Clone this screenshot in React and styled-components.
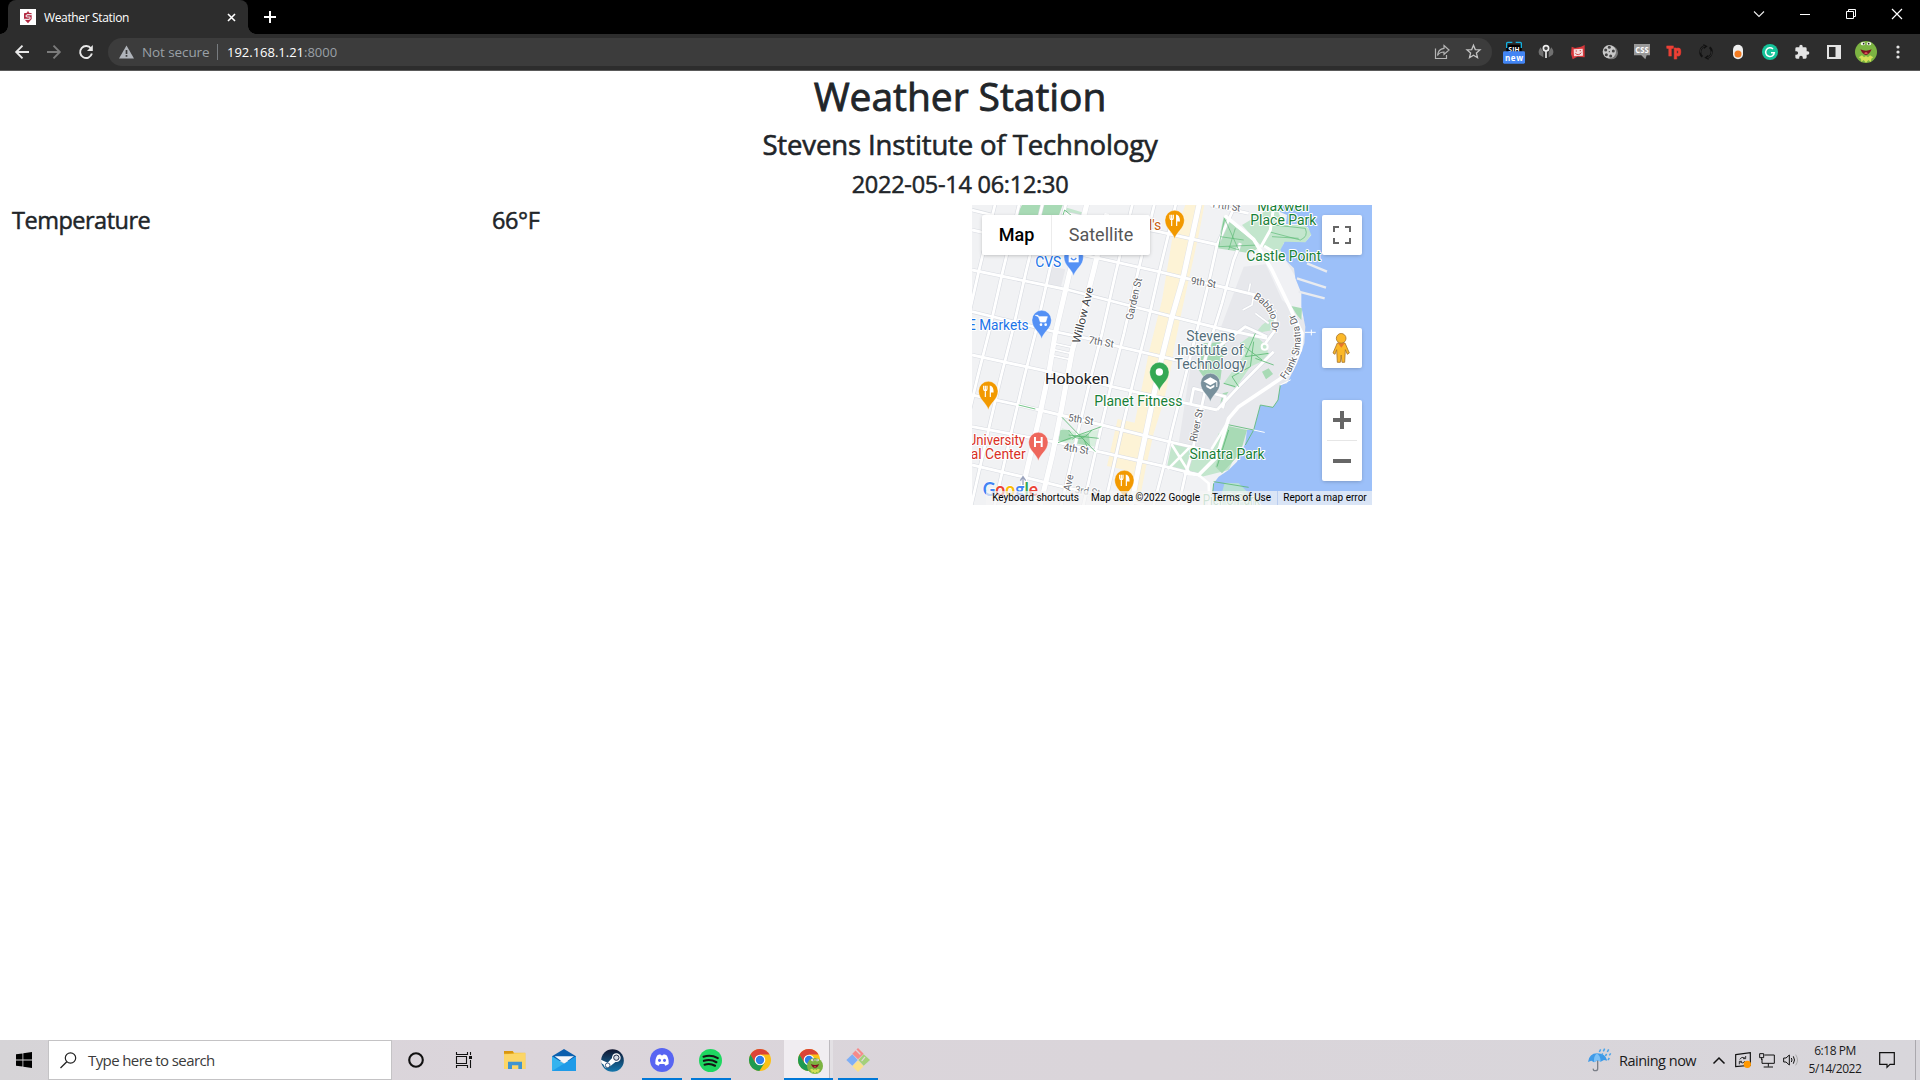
import React from "react";
import styled, { createGlobalStyle } from "styled-components";

const ui = `"Open Sans", "Noto Sans", sans-serif`;

const Global = createGlobalStyle`
  *, *::before, *::after { box-sizing: border-box; }
  body { margin: 0; background: #fff; overflow: hidden; font-family: ${ui}; }
  h1, h3, h4 { margin: 0 0 8px; }
`;

const Screen = styled.div`
  width: 1920px;
  height: 1080px;
  display: flex;
  flex-direction: column;
  overflow: hidden;
`;

const Glyph = styled.svg`
  display: block;
  flex: none;
  overflow: visible;
  width: ${(p) => p.$w}px;
  height: ${(p) => p.$h || p.$w}px;
`;

/* ---------- browser ---------- */

const TabStrip = styled.header`
  height: 34px;
  flex: none;
  background: #000;
  display: flex;
  padding-left: 8px;
`;

const Tab = styled.div`
  position: relative;
  width: 240px;
  height: 34px;
  padding: 0 12px 0 12px;
  display: flex;
  align-items: center;
  background: #2d2d2d;
  border-radius: 8px 8px 0 0;
  &::before, &::after {
    content: "";
    position: absolute;
    bottom: 0;
    width: 8px;
    height: 8px;
  }
  &::before { left: -8px; background: radial-gradient(circle at 0 0, #000 7.5px, #2d2d2d 8px); }
  &::after { right: -8px; background: radial-gradient(circle at 100% 0, #000 7.5px, #2d2d2d 8px); }
`;

const TabTitle = styled.span`
  flex: 1;
  margin-left: 8px;
  color: #fff;
  font-size: 12px;
  letter-spacing: -0.35px;
  white-space: nowrap;
`;

const NewTab = styled.div`
  width: 28px;
  margin-left: 8px;
  display: grid;
  place-items: center;
`;

const WindowButtons = styled.div`
  margin-left: auto;
  display: grid;
  grid-template-columns: repeat(4, 46px);
  height: 28px;
  align-items: center;
  justify-items: center;
`;

const Toolbar = styled.nav`
  height: 37px;
  flex: none;
  background: #2d2d2d;
  border-bottom: 1px solid #5a5a5a;
  display: flex;
  align-items: center;
  padding: 0 5px 0 6px;
`;

const NavButton = styled.div`
  width: 32px;
  height: 32px;
  display: grid;
  place-items: center;
`;

const AddressBar = styled.div`
  height: 28px;
  width: 1384px;
  margin: 0 6px;
  border-radius: 14px;
  background: #3c3c3c;
  display: flex;
  align-items: center;
  padding: 0 11px 0 11px;
  font-size: 13.5px;
  color: #9aa0a6;
`;

const NotSecure = styled.span`
  margin-left: 8px;
  width: 67px;
  white-space: nowrap;
  letter-spacing: -0.1px;
`;

const Divider = styled.span`
  width: 1px;
  height: 16px;
  background: #777b7f;
  margin: 0 9px 0 8px;
`;

const Url = styled.span`
  flex: 1;
  font-size: 13px;
  letter-spacing: -0.01px;
  b { font-weight: 400; color: #fff; }
`;

const BarIcons = styled.div`
  display: flex;
  gap: 16px;
`;

const Extensions = styled.div`
  display: grid;
  grid-template-columns: repeat(13, 32px);
  height: 36px;
  align-items: center;
  justify-items: center;
`;

/* ---------- page ---------- */

const Page = styled.main`
  flex: 1;
  min-height: 0;
  color: #212529;
  text-align: center;
  -webkit-text-stroke: 0.5px #212529;
`;

const Title = styled.h1`
  font-size: 39px;
  line-height: 48px;
  font-weight: 500;
  padding-top: 1px;
  letter-spacing: -0.05px;
  -webkit-text-stroke-width: 0.8px;
`;

const Place = styled.h3`
  font-size: 27.5px;
  line-height: 33.6px;
  font-weight: 500;
  letter-spacing: -0.13px;
  -webkit-text-stroke-width: 0.6px;
`;

const Line = styled.h4`
  font-size: 23.5px;
  line-height: 28.8px;
  font-weight: 500;
  margin-bottom: ${(p) => (p.$last ? 7 : 8)}px;
  padding-top: ${(p) => p.$top || 0}px;
  letter-spacing: ${(p) => p.$ls || 0}px;
`;

const Row = styled.section`
  display: grid;
  grid-template-columns: repeat(4, 1fr);
  text-align: left;
`;

const Col = styled.div`
  padding: 0 12px;
`;

/* ---------- map ---------- */

const MapBox = styled.div`
  position: relative;
  width: 400px;
  height: 300px;
  overflow: hidden;
  font-family: Roboto, "Liberation Sans", sans-serif;
  -webkit-text-stroke: 0;
`;

const MapCard = styled.div`
  position: absolute;
  background: #fff;
  border-radius: 2px;
  box-shadow: 0 1px 4px -1px rgba(0, 0, 0, 0.3);
  display: flex;
  align-items: center;
  justify-content: center;
  flex-direction: ${(p) => (p.$column ? "column" : "row")};
  top: ${(p) => p.$top}px;
  ${(p) => (p.$left ? "left: 10px;" : "right: 10px;")}
  width: ${(p) => p.$w || 40}px;
  height: ${(p) => p.$h || 40}px;
`;

const MapType = styled.span`
  flex: ${(p) => p.$w};
  height: 40px;
  line-height: 40px;
  text-align: center;
  font-size: 18px;
  font-weight: ${(p) => (p.$on ? 500 : 400)};
  color: ${(p) => (p.$on ? "#000" : "#565656")};
  border-left: ${(p) => (p.$on ? "0" : "1px solid #ececec")};
`;

const ZoomButton = styled.div`
  width: 30px;
  height: 40px;
  display: grid;
  place-items: center;
  &:last-child { height: 41px; border-top: 1px solid #e6e6e6; }
`;

const MapFooter = styled.div`
  position: absolute;
  right: 0;
  bottom: 0;
  height: 14px;
  display: flex;
  background: rgba(245, 245, 245, 0.7);
  font-size: 10px;
  line-height: 14px;
  color: #000;
  white-space: nowrap;
`;

const Credit = styled.div`
  width: ${(p) => p.$w}px;
  text-align: center;
  letter-spacing: ${(p) => p.$ls || 0}px;
  &:last-child { border-left: 1px solid #b9cdf0; }
`;

const shift = (pts, dx) => pts.map(([x, y]) => `${x + dx},${y}`).join(" ");
const avenue = [[50, 10], [0, 215], [-42, 400], [-75, 530], [-108, 670], [-165, 920]];
const thin = [
  ...[20, 92, 162, 232, 432, 498, 562].map((x) => shift(avenue, x)),
  "-45,215 -60,280 -90,400",
  "805,130 785,180 750,310 722,400 690,510",
  "735,135 712,240 680,370 655,470 630,570 600,690 575,800 545,915",
  "790,15 735,135",
  "700,570 680,660 660,760 640,825 620,915",
  "0,90 180,130 560,215 850,285",
  "280,40 560,95 740,135",
  "0,210 290,270 600,350 750,387 885,415",
  "0,335 234,392 345,415 440,440 620,482",
  "0,465 230,515 420,560 620,605 735,630",
  "0,585 140,615 265,645 390,675 590,725 745,760",
  "0,680 160,710 270,730 580,800 680,825",
  "0,795 150,830 270,860 520,915",
  "0,30 60,45",
  "715,15 830,40",
  "655,615 665,565 760,590 752,625",
  "735,630 800,560 905,455",
  "740,440 820,380 885,410",
  "850,285 890,310 910,345 910,390 880,430",
];
const alleys = ["245,430 300,442", "243,448 296,460", "238,466 292,478", "845,285 840,315 812,330", "850,340 890,370", "835,250 830,275"];
const thick = [
  "345,10 290,230 250,400 232,510 200,660 160,830 140,915",
  "405,40 368,200 340,310 300,455 268,630 240,770 205,915",
  "682,10 632,240 600,350 565,490 530,660 500,800 478,915",
];

const Pin = ({ x, y, c, children }) => (
  <g transform={`translate(${x} ${y})`}>
    <path d="M0 56C-5 36-29 26-29 0a29 29 0 1 1 58 0C29 26 5 36 0 56Z" fill={c} stroke="#fff" strokeOpacity=".5" strokeWidth="2" />
    {children}
  </g>
);
const Fork = () => (
  <g fill="none" stroke="#fff" strokeWidth="3.5">
    <path d="M-14-16v10q0 5 5 5t5-5v-10M-9-16V18" />
    <path d="M6 18V-14q8 2 8 17H7" fill="#fff" />
  </g>
);
const Label = ({ x, y, s = 42, c = "#188038", r = 0, w, a = "middle", halo = 6, children }) => (
  <text
    x={x} y={y} fontSize={s} fill={c} textAnchor={a}
    transform={r ? `rotate(${r} ${x} ${y})` : undefined}
    textLength={w} lengthAdjust="spacingAndGlyphs"
    stroke="#fff" strokeWidth={halo} strokeLinejoin="round" paintOrder="stroke"
  >{children}</text>
);

const MapDrawing = () => (
  <Glyph $w={400} $h={300} viewBox="0 15 1200 900" fontFamily="Roboto, sans-serif">
    <rect y="15" width="1200" height="900" fill="#f1f2f4" />
    <path d="M815 200 1000 180 1010 560 860 700 780 760 620 730 660 470 740 400Z" fill="#e7e8ec" />
    <path d="M860 150 940 180 1000 280 1000 360 930 300 880 190Z" fill="#f0f1f4" />
    <path d="M240 200 280 208 265 268 228 258Z" fill="#e7e8ec" />
    <path d="M640 15 697 15 680 105 650 240 630 330 605 450 600 490 575 605 545 700 520 810 500 915 440 915 460 810 405 798 437 657 488 668 510 560 530 460 570 300 600 120Z" fill="#fdf3d6" />
    <path d="M150 15H272L260 48H132Z" fill="#a8dab5" />
    <path d="M275 20 340 40 330 48 272 45Z" fill="#c3e6cd" />
    <path d="M755 50 865 140 835 160 735 145Z" fill="#b5dfc0" />
    <path d="M810 75 910 15 935 75 1000 75 1020 100 1000 128 935 130 925 155 880 145 865 135Z" fill="#c3e6cd" />
    <path d="M695 430 760 425 745 540 705 545 680 510Z" fill="#a8dab5" />
    <path d="M850 400 905 390 910 345 870 375Z M845 400 885 440 890 475 835 500 790 565 755 550 820 460 805 430Z" fill="#c3e6cd" />
    <path d="M958 318 990 325 988 360 975 345Z M870 515 890 505 903 522 882 538Z M752 580 770 575 745 610Z" fill="#a8dab5" />
    <path d="M270 685 320 700 380 690 370 740 330 735 258 728Z" fill="#d8efde" />
    <path d="M265 690 290 690 300 718 258 728Z M325 705 350 700 355 738 310 730Z" fill="#a8dab5" />
    <path d="M600 728 720 755 740 700 825 690 770 810 690 830 585 800Z" fill="#c3e6cd" />
    <path d="M768 678 825 690 805 760 750 820 730 800Z" fill="#a8dab5" />
    <g fill="none" strokeLinejoin="round">
      <g stroke="#d9dce2" strokeWidth="12">{thin.map((p) => <polyline key={p} points={p} />)}</g>
      <g stroke="#dfe1e6" strokeWidth="18">{thick.map((p) => <polyline key={p} points={p} />)}</g>
      <g stroke="#d9dce2" strokeWidth="8">{alleys.map((p) => <polyline key={p} points={p} />)}</g>
      <g stroke="#fff" strokeWidth="5">{alleys.map((p) => <polyline key={p} points={p} />)}</g>
      <g stroke="#fff" strokeWidth="8.5">{thin.map((p) => <polyline key={p} points={p} />)}</g>
      <g stroke="#fff" strokeWidth="15.5">{thick.map((p) => <polyline key={p} points={p} />)}</g>
    </g>
    <path
      d="M915 15 922 35 945 45 942 72 985 72 1008 82 1018 105 1000 127 938 125 925 150 940 180 966 205 970 235 988 280 988 320 1000 380 997 430 975 490 945 550 925 555 918 600 903 622 865 615 845 690 825 690 820 730 795 785 770 810 740 830 725 850 718 915 1200 915 1200 15Z"
      fill="#9cc0f9"
    />
    <path d="M758 848 800 850 830 880 820 915 740 915Z" fill="#b8e0d6" />
    <g fill="none" stroke="#5bb974" strokeWidth="2.5">
      <path d="M925 555 918 600 903 622 865 615 845 690 768 674M845 690 820 735M725 850 718 915M725 845 830 862M140 615 190 627" />
      <path d="M758 55 740 140 860 135M760 60 800 150 770 140M745 110 815 120M790 85 770 150" strokeWidth="2" />
      <path d="M905 75 1000 85Q1010 110 985 120L890 95M900 110 980 115" strokeWidth="2" />
      <path d="M270 652 370 755M388 680 258 728M290 690Q320 740 360 690M380 715 290 705M300 718Q330 690 345 740" />
      <path d="M805 430 870 480M850 400 820 470 890 460M835 500 780 530 800 560M850 475 905 495M755 550 790 560M845 425 835 500" />
      <path d="M735 800 770 690M272 48 278 30 300 48" />
    </g>
    <g fill="none" stroke="#fff" strokeLinecap="round">
      <path d="M762 50 845 118 900 210 955 325 975 370 990 400 985 450 950 520 800 620 770 655 735 770 680 825 640 818" strokeWidth="11" strokeLinejoin="round" />
      <path d="M905 20 895 90 868 138M880 140 930 170" strokeWidth="9" />
      <path d="M680 825 710 850 712 915M765 670 720 745 M600 735 650 815M650 745 590 805" strokeWidth="8" />
      <path d="M1005 190 1065 215M975 235 1062 263M980 275 1058 295" strokeWidth="7" stroke="#e9ebef" strokeLinecap="butt" />
      <path d="M1000 397H1030M1018 390V405M845 690 877 697M925 555 955 540" strokeWidth="3" />
      <circle cx="878" cy="440" r="9" strokeWidth="6" />
    </g>
    <path d="M153 855V834M145 842 153 830 161 842" fill="none" stroke="#9aa3bd" strokeWidth="4" />

    <Label x={760} y={28} s={31} c="#5f6368" r={8} w={88}>11th St</Label>
    <Label x={933} y={33} w={155}>Maxwell</Label>
    <Label x={934} y={75} w={198}>Place Park</Label>
    <Label x={935} y={183} w={224}>Castle Point</Label>
    <Label x={568} y={89} c="#c7600e" a="end">l's</Label>
    <Label x={229} y={201} c="#1a73e8" w={78}>CVS</Label>
    <Label x={170} y={390} c="#1a73e8" a="end" w={182}>E Markets</Label>
    <Label x={693} y={258} s={31} c="#5f6368" r={9} w={76}>9th St</Label>
    <Label x={386} y={436} s={31} c="#5f6368" r={10} w={76}>7th St</Label>
    <Label x={325} y={669} s={31} c="#5f6368" r={9} w={76}>5th St</Label>
    <Label x={311} y={757} s={31} c="#5f6368" r={9} w={76}>4th St</Label>
    <Label x={345} y={884} s={31} c="#80868b" r={9} w={76}>3rd St</Label>
    <Label x={496} y={299} s={31} c="#5f6368" r={-77} w={128}>Garden St</Label>
    <Label x={344} y={348} s={34} c="#3c4043" r={-76} w={172}>Willow Ave</Label>
    <Label x={684} y={678} s={31} c="#5f6368" r={-78} w={100}>River St</Label>
    <Label x={300} y={850} s={31} c="#5f6368" r={-78} w={50}>Ave</Label>
    <path id="babbio" d="M843 294Q912 335 896 400" fill="none" />
    <path id="sinatra" d="M940 540Q1020 430 960 330" fill="none" />
    <g fontSize="30" fill="#5f6368" stroke="#fff" strokeWidth="6" paintOrder="stroke" strokeLinejoin="round">
      <text textLength="122"><textPath href="#babbio">Babbio Dr</textPath></text>
      <text textLength="212"><textPath href="#sinatra">Frank Sinatra Dr</textPath></text>
    </g>
    <Label x={716} y={423} c="#546e7a" w={147}>Stevens</Label>
    <Label x={715} y={465} c="#546e7a" w={200}>Institute of</Label>
    <Label x={715} y={507} c="#546e7a" w={215}>Technology</Label>
    <Label x={315} y={551} s={44} c="#202124" w={192}>Hoboken</Label>
    <Label x={499} y={618} w={264}>Planet Fitness</Label>
    <Label x={159} y={735} c="#d93025" a="end" w={172}>University</Label>
    <Label x={161} y={777} c="#d93025" a="end" w={165}>al Center</Label>
    <Label x={765} y={777} w={225}>Sinatra Park</Label>
    <Label x={778} y={915} c="#6fb58a" w={172}>Pier C Park</Label>

    <Pin x={608} y={60} c="#f29900"><Fork /></Pin>
    <Pin x={49} y={573} c="#f29900"><Fork /></Pin>
    <Pin x={457} y={840} c="#f29900"><Fork /></Pin>
    <Pin x={305} y={171} c="#5491f5">
      <path d="M-15-10H15V16H-15Z" fill="#fff" /><path d="M-8 3Q0 14 8 3" fill="none" stroke="#5491f5" strokeWidth="4" />
    </Pin>
    <Pin x={209} y={360} c="#5491f5">
      <path d="M-19-14H-11L-4 6H12L17-10H-9Z" fill="#fff" stroke="#fff" strokeWidth="2" />
      <circle cx="-2" cy="14" r="4" fill="#fff" /><circle cx="12" cy="14" r="4" fill="#fff" />
    </Pin>
    <Pin x={562} y={516} c="#34a853"><circle r="11" fill="#fff" /></Pin>
    <Pin x={199} y={726} c="#ee675c"><path d="M-10-15V15M10-15V15M-10 0H10" stroke="#fff" strokeWidth="6" /></Pin>
    <Pin x={715} y={549} c="#78909c">
      <path d="M0-17 21-5 0 7-21-5ZM-12 5 0 12 12 5V12L0 19-12 12ZM18-4h3V12h-3Z" fill="#fff" />
    </Pin>
    <text x="32" y="887" fontSize="54" fontFamily="Lato, sans-serif" textLength="166" lengthAdjust="spacingAndGlyphs" fontWeight="700" stroke="#fff" strokeWidth="4" paintOrder="stroke"><tspan fill="#4285f4">G</tspan><tspan fill="#ea4335">o</tspan><tspan fill="#fbbc04">o</tspan><tspan fill="#4285f4">g</tspan><tspan fill="#34a853">l</tspan><tspan fill="#ea4335">e</tspan></text>
  </Glyph>
);

const CampusMap = () => (
  <MapBox>
    <MapDrawing />
    <MapCard $top={10} $left $w={168}>
      <MapType $on $w={69}>Map</MapType>
      <MapType $w={98}>Satellite</MapType>
    </MapCard>
    <MapCard $top={10}>
      <Glyph $w={18} viewBox="0 0 18 18"><path d="M1 6V1h5M12 1h5v5M17 12v5h-5M6 17H1v-5" fill="none" stroke="#666" strokeWidth="2" /></Glyph>
    </MapCard>
    <MapCard $top={123}>
      <Glyph $w={18} $h={30} viewBox="1 0 54 90">
        <path d="M14 30H37L50 60 44 64 38 50 36 88H28L25.500 66 23 88H14L12 50 7 64 1 60Z" fill="#fbb829" stroke="#a9762a" strokeWidth="2.500" />
        <path d="M16 31H36L26 44Z" fill="#e8762c" />
        <circle cx="25.500" cy="16" r="14.500" fill="#fbb829" stroke="#a9762a" strokeWidth="2.500" />
      </Glyph>
    </MapCard>
    <MapCard $top={195} $h={81} $column>
      <ZoomButton><Glyph $w={18} viewBox="0 0 18 18"><path d="M0 9H18M9 0V18" stroke="#666" strokeWidth="4" /></Glyph></ZoomButton>
      <ZoomButton><Glyph $w={18} viewBox="0 0 18 18"><path d="M0 9H18" stroke="#666" strokeWidth="4" /></Glyph></ZoomButton>
    </MapCard>
    <MapFooter>
      <Credit $w={99}>Keyboard shortcuts</Credit>
      <Credit $w={121}>Map data ©2022 Google</Credit>
      <Credit $w={71}>Terms of Use</Credit>
      <Credit $w={95}>Report a map error</Credit>
    </MapFooter>
  </MapBox>
);

/* ---------- taskbar ---------- */

const Taskbar = styled.footer`
  height: 40px;
  flex: none;
  display: flex;
  background: linear-gradient(90deg, #d6d4d7, #dbd5db 25%, #dad5da 60%, #d8d6db);
  color: #1b1b1b;
`;

const TaskCell = styled.div`
  position: relative;
  width: ${(p) => p.$w || 49}px;
  height: 40px;
  display: grid;
  place-items: center;
  background: ${(p) => (p.$active ? "#f0edf1" : "transparent")};
  &::after {
    content: "";
    position: absolute;
    bottom: 0;
    height: 2px;
    left: ${(p) => (p.$active ? 0 : 4.5)}px;
    right: ${(p) => (p.$active ? 0 : 4.5)}px;
    background: ${(p) => (p.$open ? "#0078d7" : "transparent")};
  }
`;

const StackEdge = styled.i`
  position: absolute;
  right: 0;
  top: 0;
  width: 4px;
  height: 38px;
  background: #e3e0e4;
  border-left: 1px solid #bdbabf;
`;

const SearchBox = styled.div`
  width: 344px;
  height: 40px;
  background: #fff;
  border: 1px solid #c4c3c5;
  display: flex;
  align-items: center;
  padding-left: 11px;
  gap: 11px;
  font-size: 15px;
  color: #3b3b3b;
  letter-spacing: -0.6px;
`;

const Apps = styled.div`
  display: flex;
  margin-left: 2px;
`;

const Tray = styled.div`
  margin-left: auto;
  display: flex;
  align-items: center;
  padding-right: 4px;
`;

const Forecast = styled.span`
  margin-left: 7px;
  width: 88px;
  font-size: 14.5px;
  letter-spacing: -0.5px;
  white-space: nowrap;
`;

const TrayCell = styled.div`
  width: 24px;
  display: grid;
  place-items: center;
`;

const Clock = styled.div`
  width: 64px;
  text-align: center;
  font-size: 12px;
  line-height: 18px;
  letter-spacing: -0.45px;
`;

const Notice = styled.div`
  width: 49px;
  height: 40px;
  padding-right: 8px;
  display: grid;
  place-items: center;
  border-right: 1px solid #aaa8ad;
`;

const Frog = ({ cx, cy, r }) => (
  <g transform={`translate(${cx} ${cy}) scale(${r / 33})`}>
    <circle r="33" fill="#7cb342" />
    <path d="M-22 16 -12 10 -6 16 0 12 6 16 12 10 22 16 16 20 14 30 7 24 0 32-7 24-14 30-15 20Z" fill="#d4e157" />
    <path d="M-17-8Q0 0 17-8 10 8 0 9-10 8-17-8Z" fill="#7b1220" />
    <path d="M-6 4Q0-2 6 4 0 8-6 4Z" fill="#ef5b63" />
    <ellipse cx="-9" cy="-25" rx="7" ry="5" fill="#f4f7e8" /><ellipse cx="9" cy="-25" rx="7" ry="5" fill="#f4f7e8" />
    <circle cx="-7" cy="-25" r="2.500" fill="#222" /><circle cx="8" cy="-25" r="2.500" fill="#222" />
  </g>
);

const ChromeLogo = ({ frog }) => (
  <Glyph $w={24} viewBox="0 0 72 72">
    <circle cx="36" cy="36" r="33" fill="#fbc116" />
    <path d="M7.400 19.500A33 33 0 0 1 64.600 19.500H36L21 44Z" fill="#db4437" />
    <path d="M7.400 19.500A33 33 0 0 0 34 69L50 44 22 44Z" fill="#1e9a51" />
    <circle cx="36" cy="36" r="16" fill="#fff" />
    <circle cx="36" cy="36" r="12.500" fill="#2f7de9" />
    {frog && <Frog cx={54} cy={54} r={24} />}
  </Glyph>
);

export default function App() {
  return (
    <Screen>
      <Global />
      <TabStrip>
        <Tab>
          <Glyph $w={16} viewBox="0 0 48 48">
            <rect width="48" height="48" fill="#fff" />
            <path d="M24 5 27 11 35 13V30L24 43 12 30V13L21 11Z" fill="#b2263f" />
            <path d="M37 17H22Q14 21 22 24H29Q33 29 26 31H10" fill="none" stroke="#ecdfe3" strokeWidth="3.500" />
          </Glyph>
          <TabTitle>Weather Station</TabTitle>
          <Glyph $w={9} viewBox="0 0 9 9"><path d="M1 1 8 8M8 1 1 8" stroke="#fff" strokeWidth="1.600" /></Glyph>
        </Tab>
        <NewTab><Glyph $w={12} viewBox="0 0 12 12"><path d="M6 0V12M0 6H12" stroke="#fff" strokeWidth="2" /></Glyph></NewTab>
        <WindowButtons>
          <Glyph $w={10} $h={6} viewBox="0 0 10 6"><path d="M0 .500 5 5.500 10 .500" fill="none" stroke="#eee" strokeWidth="1.100" /></Glyph>
          <Glyph $w={10} viewBox="0 0 10 10"><path d="M0 5.500H10" stroke="#fff" /></Glyph>
          <Glyph $w={10} viewBox="0 0 10 10"><path d="M.500 2.500H7.500V9.500H.500ZM2.500 2.500V.500H9.500V7.500H7.500" fill="none" stroke="#fff" /></Glyph>
          <Glyph $w={10} viewBox="0 0 10 10"><path d="M0 0 10 10M10 0 0 10" stroke="#fff" strokeWidth="1.200" /></Glyph>
        </WindowButtons>
      </TabStrip>

      <Toolbar>
        <NavButton><Glyph $w={14} viewBox="0 0 14 14"><path d="M14 7H1.500M7.500 .700 1.200 7 7.500 13.300" fill="none" stroke="#e8e8e8" strokeWidth="1.900" /></Glyph></NavButton>
        <NavButton><Glyph $w={14} viewBox="0 0 14 14"><path d="M0 7H12.500M6.500 .700 12.800 7 6.500 13.300" fill="none" stroke="#7b7b7b" strokeWidth="1.900" /></Glyph></NavButton>
        <NavButton>
          <Glyph $w={14} viewBox="0 0 14 14">
            <path d="M12 3.500A6 6 0 1 0 12.900 8.600" fill="none" stroke="#e8e8e8" strokeWidth="1.900" />
            <path d="M13.800 0V6H8Z" fill="#e8e8e8" />
          </Glyph>
        </NavButton>
        <AddressBar>
          <Glyph $w={15} $h={14} viewBox="0 0 15 14"><path d="M7.500 .500 15 13.500H0Z" fill="#b0b4ba" /><path d="M7.500 5V9M7.500 10V11.800" stroke="#3c3c3c" strokeWidth="1.700" /></Glyph>
          <NotSecure>Not secure</NotSecure>
          <Divider />
          <Url><b>192.168.1.21</b>:8000</Url>
          <BarIcons>
            <Glyph $w={16} viewBox="0 0 16 16"><path d="M1.500 4.500V14.500H12.500V11M10 1.500 15 6 10 10.500V8Q5.500 8 3.500 11.500 4 5 10 4.300Z" fill="none" stroke="#b5b5b5" strokeWidth="1.200" /></Glyph>
            <Glyph $w={15} viewBox="0 0 15 15"><path d="M7.500 1.200 9.300 5.600 14 5.900 10.400 9 11.500 13.700 7.500 11.200 3.500 13.700 4.600 9 1 5.900 5.700 5.600Z" fill="none" stroke="#c4c4c4" strokeWidth="1.300" /></Glyph>
          </BarIcons>
        </AddressBar>
        <Extensions>
          <Glyph $w={22} $h={22} viewBox="0 -3 66 66" fontFamily="Open Sans, sans-serif" textAnchor="middle" fontWeight="700">
            <rect x="10" y="8" width="46" height="26" fill="#000" />
            <path d="M11 18V4Q11 1 14 1H28M38 1H52Q55 1 55 4V18" fill="none" stroke="#14b1e0" strokeWidth="4" />
            <text x="33" y="30" fontSize="20" fill="#fff" textLength="34">SIH</text>
            <rect y="28" width="66" height="37" rx="4" fill="#4285f4" />
            <text x="33" y="56" fontSize="24" fill="#fff" textLength="54">new</text>
          </Glyph>
          <Glyph $w={16} viewBox="0 0 48 48">
            <path d="M8 10Q-2 22 4 32L16 40V24ZM40 10Q50 22 44 32L32 40V24Z" fill="#707070" />
            <path d="M24 20V42" stroke="#ccc" strokeWidth="6" /><circle cx="24" cy="13" r="8" fill="#444" stroke="#eee" strokeWidth="5" />
          </Glyph>
          <Glyph $w={16} viewBox="0 0 48 48">
            <path d="M5 8 15 12 33 8 44 3V40L22 38 8 46 3 30Z" fill="#d8383c" />
            <path d="M11 16 38 14 39 35 12 37Z" fill="#f6dcdc" /><path d="M16 28Q25 37 34 26M17 21h4M29 20h4" fill="none" stroke="#c62828" strokeWidth="2.500" />
          </Glyph>
          <Glyph $w={16} viewBox="0 0 48 48">
            <circle cx="28" cy="26" r="20" fill="#777" /><circle cx="22" cy="23" r="20" fill="#c9c9c9" />
            <g fill="#444"><circle cx="22" cy="10" r="4.500" /><circle cx="11" cy="18" r="4.500" /><circle cx="13" cy="32" r="4.500" /><circle cx="26" cy="36" r="4.500" /><circle cx="34" cy="21" r="4.500" /><circle cx="22" cy="23" r="2" /></g>
          </Glyph>
          <Glyph $w={16} viewBox="0 0 48 48" fontFamily="Open Sans, sans-serif" fontWeight="700">
            <path d="M0 0H48V34H38L34 46 22 34H0Z" fill="#999" /><text x="4" y="26" fontSize="25" fill="#fff" textLength="40" lengthAdjust="spacingAndGlyphs">CSS</text>
          </Glyph>
          <Glyph $w={16} viewBox="0 0 48 48" fontFamily="Open Sans, sans-serif" fontWeight="800">
            <text x="1" y="36" fontSize="43" fill="#ee4035" stroke="#ee4035" strokeWidth="2" textLength="44" lengthAdjust="spacingAndGlyphs">Tp</text>
          </Glyph>
          <Glyph $w={16} viewBox="0 0 48 48">
            <path d="M13 38A18 18 0 0 1 20 7M35 10A18 18 0 0 1 28 41" fill="none" stroke="#111" strokeWidth="6" />
            <path d="M16 0 29 7 18 15ZM32 48 19 41 30 33Z" fill="#111" />
            <path d="M7 26A18 18 0 0 1 20 7M41 22A18 18 0 0 1 28 41" fill="none" stroke="#666" strokeWidth="1" />
          </Glyph>
          <Glyph $w={16} viewBox="0 0 48 48"><rect x="9" y="2" width="30" height="44" rx="15" fill="#eee" /><circle cx="24" cy="30" r="10.500" fill="#f47b20" /></Glyph>
          <Glyph $w={16} viewBox="0 0 48 48">
            <circle cx="24" cy="24" r="24" fill="#15c39a" />
            <path d="M33 15A13 13 0 1 0 37 26H27" fill="none" stroke="#fff" strokeWidth="4.500" />
          </Glyph>
          <Glyph $w={16} viewBox="0 0 24 24"><path d="M20.500 11H19V7a2 2 0 0 0-2-2h-4V3.500a2.500 2.500 0 0 0-5 0V5H4a2 2 0 0 0-2 2v3.800h1.500a2.700 2.700 0 0 1 0 5.400H2V20a2 2 0 0 0 2 2h3.800v-1.500a2.700 2.700 0 0 1 5.400 0V22H17a2 2 0 0 0 2-2v-4h1.500a2.500 2.500 0 0 0 0-5Z" fill="#e3e3e3" /></Glyph>
          <Glyph $w={14} viewBox="0 0 14 14"><path d="M0 0H14V14H0ZM2 2V12H8.500V2Z" fill="#e3e3e3" fillRule="evenodd" /></Glyph>
          <Glyph $w={22} viewBox="0 0 66 66"><Frog cx={33} cy={33} r={33} /></Glyph>
          <Glyph $w={4} $h={14} viewBox="0 0 4 14" fill="#e3e3e3"><circle cx="2" cy="2" r="1.600" /><circle cx="2" cy="7" r="1.600" /><circle cx="2" cy="12" r="1.600" /></Glyph>
        </Extensions>
      </Toolbar>

      <Page>
        <Title>Weather Station</Title>
        <Place>Stevens Institute of Technology</Place>
        <Line $last $ls={-0.26}>2022-05-14 06:12:30</Line>
        <Row>
          <Col><Line $top={1} $ls={-0.5}>Temperature</Line></Col>
          <Col><Line $top={1} $ls={-0.4}>66°F</Line></Col>
          <Col><CampusMap /></Col>
        </Row>
      </Page>

      <Taskbar>
        <TaskCell $w={48}>
          <Glyph $w={16} viewBox="0 0 16 16"><path d="M0 2.300 6.500 1.400V7.600H0ZM7.300 1.300 16 0V7.600H7.300ZM0 8.400H6.500V14.600L0 13.700ZM7.300 8.400H16V16L7.300 14.700Z" fill="#000" /></Glyph>
        </TaskCell>
        <SearchBox>
          <Glyph $w={17} $h={17} viewBox="0 0 17 17"><circle cx="10.500" cy="6" r="5.200" fill="none" stroke="#222" strokeWidth="1.200" /><path d="M6.800 9.800 .500 16" stroke="#222" strokeWidth="1.300" /></Glyph>
          Type here to search
        </SearchBox>
        <TaskCell $w={48}><Glyph $w={16} viewBox="0 0 16 16"><circle cx="8" cy="8" r="6.800" fill="none" stroke="#111" strokeWidth="2.100" /></Glyph></TaskCell>
        <TaskCell $w={48}>
          <Glyph $w={16} viewBox="0 0 16 16"><path d="M.500 0V2.500H11.500V0M.500 16V13.500H11.500V16M.500 4.500H10.500V11.500H.500ZM14.500 0V3M14.500 8V16" fill="none" stroke="#111" strokeWidth="1.100" /><rect x="13" y="4" width="3" height="3" fill="#111" /></Glyph>
        </TaskCell>
        <Apps>
          <TaskCell>
            <Glyph $w={22} $h={18} viewBox="0 0 66 54">
              <path d="M0 0H26L31 5H64V54H0Z" fill="#f8c63c" /><path d="M0 0H26L30 8H0Z" fill="#d9960f" /><path d="M0 10 64 6V54H0Z" fill="#fcd667" />
              <path d="M12 54V32H54V54H43V43H24V54Z" fill="#3f94d1" />
            </Glyph>
          </TaskCell>
          <TaskCell>
            <Glyph $w={24} $h={22} viewBox="0 0 72 66">
              <path d="M0 22 36 0 72 22V36H0Z" fill="#0b5fae" />
              <path d="M0 22 72 66H0Z" fill="#35b3ee" /><path d="M72 22V66H0Z" fill="#1f9be8" /><path d="M8 22H66L37 43Z" fill="#f5f7fa" />
            </Glyph>
          </TaskCell>
          <TaskCell>
            <Glyph $w={23} viewBox="0 0 69 69">
              <defs><linearGradient id="steam" x2="0" y2="1"><stop stopColor="#10152f" /><stop offset="1" stopColor="#1577ad" /></linearGradient></defs>
              <circle cx="34.500" cy="34.500" r="34" fill="url(#steam)" />
              <path d="M0 32 20 41 36 24 50 34 33 47 22 56Q10 58 8 47L1 42Z" fill="#fff" />
              <circle cx="46" cy="26" r="13" fill="#fff" /><circle cx="46" cy="26" r="8" fill="#d8dde5" stroke="#1b2748" strokeWidth="3" />
              <circle cx="20" cy="49" r="7" fill="#fff" stroke="#1d3f6b" strokeWidth="2.500" />
            </Glyph>
          </TaskCell>
          <TaskCell $open>
            <Glyph $w={24} viewBox="0 0 72 72">
              <circle cx="36" cy="36" r="36" fill="#5865f2" />
              <path d="M16 48Q15 31 23 21L31 19 33 22H39L41 19 49 21Q57 31 56 48 51 52 46 53L43 48H29L26 53Q20 52 16 48Z" fill="#fff" />
              <ellipse cx="28.500" cy="37" rx="4.500" ry="5" fill="#5865f2" /><ellipse cx="43.500" cy="37" rx="4.500" ry="5" fill="#5865f2" />
            </Glyph>
          </TaskCell>
          <TaskCell $open>
            <Glyph $w={23} viewBox="0 0 66 66">
              <circle cx="33" cy="33" r="33" fill="#1ed760" />
              <path d="M13 22Q34 15 54 26M14 34Q33 28 50 38M16 45Q32 40 46 48" fill="none" stroke="#151515" strokeWidth="6" strokeLinecap="round" />
            </Glyph>
          </TaskCell>
          <TaskCell><ChromeLogo /></TaskCell>
          <TaskCell $active $open><ChromeLogo frog /><StackEdge /></TaskCell>
          <TaskCell $open>
            <Glyph $w={24} viewBox="0 0 72 72">
              <path d="M36 0 53 17 36 34 19 17Z" fill="#f58a8a" /><path d="M19 19 35 36 19 53 1 36Z" fill="#7eaef5" />
              <path d="M53 19 72 36 53 53 37 36Z" fill="#a4d07a" /><path d="M36 38 53 55 36 72 19 55Z" fill="#fbe18a" />
              <path d="M30 6 42 18M56 28 48 38" stroke="#dcd6dc" strokeWidth="4" strokeLinecap="round" />
            </Glyph>
          </TaskCell>
        </Apps>
        <Tray>
          <Glyph $w={24} viewBox="0 0 72 72">
            <path d="M29 36V62Q29 68 22 68T16 62" fill="none" stroke="#7b7f87" strokeWidth="4" />
            <path d="M0 42Q4 16 27 16 52 16 58 38L48 36 38 41 29 37 18 43 10 38Z" fill="#3f9be8" /><path d="M18 43Q16 25 27 16 38 25 38 41L29 37Z" fill="#7cc1f7" />
            <path d="M38 4 34 12M50 2 46 10M62 4 58 12M44 16 41 22M56 18 52 24M68 16 64 22M64 30 60 36" stroke="#4aa3ea" strokeWidth="4.500" />
          </Glyph>
          <Forecast>Raining now</Forecast>
          <TrayCell><Glyph $w={12} $h={7} viewBox="0 0 12 7"><path d="M.500 6.500 6 1 11.500 6.500" fill="none" stroke="#111" strokeWidth="1.500" /></Glyph></TrayCell>
          <TrayCell>
            <Glyph $w={16} viewBox="0 0 48 48"><path d="M2 8 46 2V40L2 44Z" fill="none" stroke="#111" strokeWidth="3.500" /><path d="M14 22Q20 12 30 18M32 12V20H24M30 28Q24 36 16 31M13 37V28H21" fill="none" stroke="#111" strokeWidth="2.500" /><circle cx="37" cy="37" r="11" fill="#ff9800" /></Glyph>
          </TrayCell>
          <TrayCell>
            <Glyph $w={16} viewBox="0 0 48 48"><path d="M16 9H46V34H9V21M28 34V44M14 45H42" fill="none" stroke="#111" strokeWidth="3" /><path d="M2 5H14V17H2ZM8 17V24" fill="none" stroke="#111" strokeWidth="3" /></Glyph>
          </TrayCell>
          <TrayCell>
            <Glyph $w={16} viewBox="0 0 48 48"><path d="M2 18H9L19 9V39L9 30H2ZM25 18Q29 24 25 30M31 13Q38 24 31 35" fill="none" stroke="#111" strokeWidth="3" /><path d="M38 8Q49 24 38 40" fill="none" stroke="#aaa" strokeWidth="3" /></Glyph>
          </TrayCell>
          <Clock>6:18 PM<br />5/14/2022</Clock>
          <Notice><Glyph $w={16} viewBox="0 0 16 16"><path d="M.700 .700H15.300V12.300H11L8 15.300V12.300H.700Z" fill="none" stroke="#111" strokeWidth="1.200" /></Glyph></Notice>
        </Tray>
      </Taskbar>
    </Screen>
  );
}
